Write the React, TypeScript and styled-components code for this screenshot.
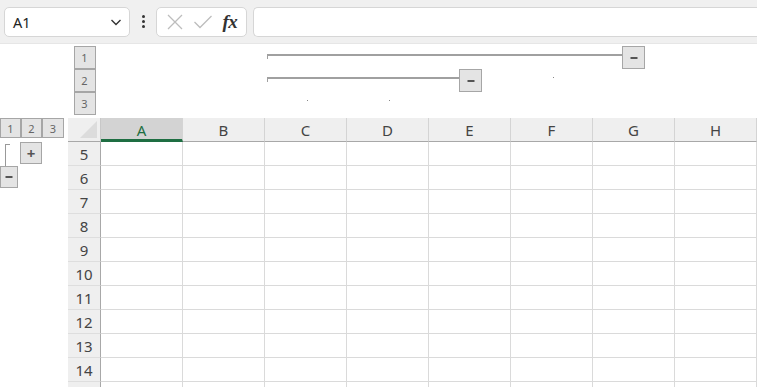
import React from 'react';
import styled, { createGlobalStyle } from 'styled-components';

const GlobalStyle = createGlobalStyle`
  html, body {
    margin: 0;
    padding: 0;
    background: #ffffff;
    overflow: hidden;
  }
  body {
    font-family: 'Noto Sans', 'Open Sans', Arial, sans-serif;
    color: #333;
  }
`;

const COLUMNS = ['A', 'B', 'C', 'D', 'E', 'F', 'G', 'H'];
const ROWS = [5, 6, 7, 8, 9, 10, 11, 12, 13, 14, 15];
const LAST_VISIBLE_ROW = 14;
const COL_W = 82;

// column outline groups (left offset / line length in px from sheet start)
const groups = [
  { level: 0, left: 166, width: 355 },
  { level: 1, left: 166, width: 192 },
];
const dots = [
  { level: 1, left: 452 },
  { level: 2, left: 206 },
  { level: 2, left: 288 },
];

const Page = styled.div`
  width: 757px;
  height: 387px;
  overflow: hidden;
  display: flex;
  flex-direction: column;
`;

/* ~~~ formula bar ~~~ */
const FormulaBar = styled.div`
  height: 44px;
  flex-shrink: 0;
  background: #f0f0f0;
  display: flex;
  align-items: center;
  padding: 0 0 0 4px;
  gap: 6px;
  box-sizing: border-box;
  border-bottom: 1px solid #e6e6e6;
`;

const NameBox = styled.div`
  width: 126px;
  height: 30px;
  box-sizing: border-box;
  background: #fff;
  border: 1px solid #d6d6d6;
  border-radius: 5px;
  display: flex;
  align-items: center;
  justify-content: space-between;
  padding: 0 6px 0 8px;
  font-size: 14.5px;
  color: #222;
`;

const Kebab = styled.div`
  width: 14px;
  display: flex;
  flex-direction: column;
  align-items: center;
  gap: 2px;
  span {
    width: 3px;
    height: 3px;
    border-radius: 50%;
    background: #333;
  }
`;

const FxBox = styled.div`
  width: 91px;
  height: 30px;
  box-sizing: border-box;
  background: #fff;
  border: 1px solid #d6d6d6;
  border-radius: 5px;
  display: flex;
  align-items: center;
  justify-content: space-around;
  padding: 0 4px;
`;

const FxLabel = styled.span`
  font-family: 'Liberation Serif', 'DejaVu Serif', serif;
  font-style: italic;
  font-weight: bold;
  font-size: 19px;
  color: #333;
  letter-spacing: -0.5px;
  line-height: 1;
`;

const FormulaInput = styled.div`
  flex: 1;
  height: 30px;
  box-sizing: border-box;
  background: #fff;
  border: 1px solid #d6d6d6;
  border-right: none;
  border-radius: 5px 0 0 5px;
`;

/* ~~~ sheet ~~~ */
const Sheet = styled.div`
  display: grid;
  grid-template-columns: 68px 33px repeat(${COLUMNS.length}, ${COL_W}px);
  grid-template-rows: 74px 24px repeat(${ROWS.length}, 24px);
`;

const Gutter = styled.div`
  background: #fff;
  position: relative;
`;

const LevelStack = styled.div`
  display: flex;
  flex-direction: column;
  align-items: center;
  padding-top: 2px;
  height: 100%;
  box-sizing: border-box;
`;

const OutlineBtn = styled.div<{ $w?: number; $h?: number }>`
  width: ${(p) => p.$w ?? 22}px;
  height: ${(p) => p.$h ?? 23}px;
  box-sizing: border-box;
  background: #e4e4e4;
  border: 1px solid #a6a6a6;
  display: flex;
  align-items: center;
  justify-content: center;
  font-size: 11px;
  color: #666;
  line-height: 1;
  & + & {
    margin-top: ${(p) => (p.$h ? 0 : -1)}px;
  }
`;

const RowLevels = styled.div`
  display: flex;
  align-items: flex-start;
  height: 100%;
`;

const RowLevelBtn = styled(OutlineBtn)`
  & + & {
    margin-top: 0;
  }
`;

const OutlineCanvas = styled.div`
  grid-column: 3 / -1;
  position: relative;
  background: #fff;
  overflow: hidden;
`;

const GroupBar = styled.div<{ $level: number }>`
  position: absolute;
  top: ${(p) => 10 + p.$level * 23}px;
  height: 2px;
  background: #a0a0a0;
  &::before {
    content: '';
    position: absolute;
    left: 0;
    top: 0;
    width: 1px;
    height: 5px;
    background: #a0a0a0;
  }
`;

const GroupBtn = styled(OutlineBtn)<{ $level: number }>`
  position: absolute;
  top: ${(p) => 2 + p.$level * 23}px;
  width: 23px;
  height: 23px;
`;

const Dot = styled.div<{ $level: number }>`
  position: absolute;
  top: ${(p) => 33 + (p.$level - 1) * 23}px;
  width: 1px;
  height: 1px;
  background: #888;
`;

const Corner = styled.div`
  background: #efefef;
  border-right: 1px solid #c8c8c8;
  border-bottom: 1px solid #a8a8a8;
  position: relative;
  &::after {
    content: '';
    position: absolute;
    right: 3px;
    bottom: 3px;
    width: 0;
    height: 0;
    border-left: 17px solid transparent;
    border-bottom: 17px solid #dcdcdc;
  }
`;

const ColHeader = styled.div<{ $active?: boolean }>`
  background: ${(p) => (p.$active ? '#d3d3d3' : '#efefef')};
  border-right: 1px solid #d4d4d4;
  border-bottom: ${(p) => (p.$active ? '3px solid #1e6e42' : '1px solid #a8a8a8')};
  box-sizing: border-box;
  display: flex;
  align-items: center;
  justify-content: center;
  padding-top: ${(p) => (p.$active ? '2px' : '0')};
  font-size: 15px;
  color: ${(p) => (p.$active ? '#1e6e42' : '#444')};
`;

const RowHeader = styled.div`
  background: #efefef;
  border-right: 1px solid #a8a8a8;
  border-bottom: 1px solid #dedede;
  box-sizing: border-box;
  display: flex;
  align-items: center;
  justify-content: center;
  font-size: 15px;
  color: #444;
`;

const Cell = styled.div`
  background: #fff;
  border-right: 1px solid #dadada;
  border-bottom: 1px solid #dadada;
  box-sizing: border-box;
`;

const Bracket = styled.div`
  position: absolute;
  left: 5px;
  top: 2px;
  width: 4px;
  height: 22px;
  border-left: 1px solid #999;
  border-top: 1px solid #999;
`;

const PlusBtn = styled(OutlineBtn)`
  position: absolute;
  left: 20px;
  top: 0;
  font-size: 15px;
  font-weight: bold;
  color: #555;
`;

const MinusBtn = styled(OutlineBtn)`
  position: absolute;
  left: 0;
  top: 0;
  width: 18px;
`;

const Chevron = () => (
  <svg width="14" height="14" viewBox="0 0 14 14">
    <path d="M2.5 5 L7 9.5 L11.5 5" fill="none" stroke="#333" strokeWidth="1.4" />
  </svg>
);

const CrossIcon = () => (
  <svg width="18" height="18" viewBox="0 0 18 18">
    <path d="M2 2 L16 16 M16 2 L2 16" stroke="#bdbdbd" strokeWidth="1.3" fill="none" />
  </svg>
);

const CheckIcon = () => (
  <svg width="20" height="18" viewBox="0 0 20 18">
    <path d="M1.5 9 L7 14.5 L18.5 3" stroke="#bdbdbd" strokeWidth="1.3" fill="none" />
  </svg>
);

const MinusGlyph = () => (
  <svg width="10" height="4" viewBox="0 0 10 4">
    <rect x="1.5" y="1" width="7" height="2" fill="#555" />
  </svg>
);

const App = () => {
  return (
    <Page>
      <GlobalStyle />
      <FormulaBar>
        <NameBox>
          <span>A1</span>
          <Chevron />
        </NameBox>
        <Kebab>
          <span />
          <span />
          <span />
        </Kebab>
        <FxBox>
          <CrossIcon />
          <CheckIcon />
          <FxLabel>fx</FxLabel>
        </FxBox>
        <FormulaInput />
      </FormulaBar>

      <Sheet>
        {/* column outline area */}
        <Gutter />
        <LevelStack>
          <OutlineBtn>1</OutlineBtn>
          <OutlineBtn>2</OutlineBtn>
          <OutlineBtn>3</OutlineBtn>
        </LevelStack>
        <OutlineCanvas>
          {groups.map((g, i) => (
            <React.Fragment key={i}>
              <GroupBar $level={g.level} style={{ left: g.left, width: g.width }} />
              <GroupBtn $level={g.level} style={{ left: g.left + g.width }}>
                <MinusGlyph />
              </GroupBtn>
            </React.Fragment>
          ))}
          {dots.map((d, i) => (
            <Dot key={i} $level={d.level} style={{ left: d.left }} />
          ))}
        </OutlineCanvas>

        {/* header row */}
        <Gutter>
          <RowLevels>
            <RowLevelBtn $w={21} $h={20}>1</RowLevelBtn>
            <RowLevelBtn $w={21} $h={20}>2</RowLevelBtn>
            <RowLevelBtn $w={22} $h={20}>3</RowLevelBtn>
          </RowLevels>
        </Gutter>
        <Corner />
        {COLUMNS.map((c) => (
          <ColHeader key={c} $active={c === 'A'}>
            {c}
          </ColHeader>
        ))}

        {ROWS.map((r) => (
          <React.Fragment key={r}>
            <Gutter>
              {r === 5 && (
                <>
                  <Bracket />
                  <PlusBtn $h={22}>+</PlusBtn>
                </>
              )}
              {r === 6 && (
                <MinusBtn $h={22}>
                  <MinusGlyph />
                </MinusBtn>
              )}
            </Gutter>
            <RowHeader>{r <= LAST_VISIBLE_ROW ? r : ''}</RowHeader>
            {COLUMNS.map((c) => (
              <Cell key={c} />
            ))}
          </React.Fragment>
        ))}
      </Sheet>
    </Page>
  );
};

export default App;
